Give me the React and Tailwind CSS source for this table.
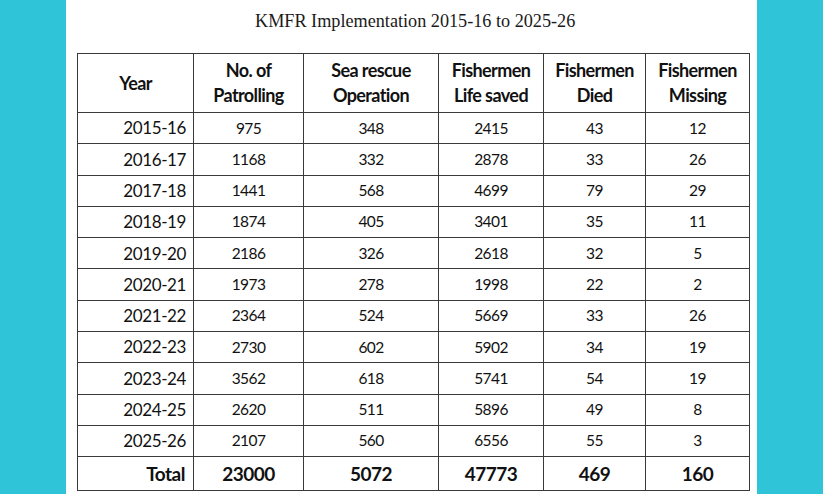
const ROWS = [
  ['2015-16', 975, 348, 2415, 43, 12],
  ['2016-17', 1168, 332, 2878, 33, 26],
  ['2017-18', 1441, 568, 4699, 79, 29],
  ['2018-19', 1874, 405, 3401, 35, 11],
  ['2019-20', 2186, 326, 2618, 32, 5],
  ['2020-21', 1973, 278, 1998, 22, 2],
  ['2021-22', 2364, 524, 5669, 33, 26],
  ['2022-23', 2730, 602, 5902, 34, 19],
  ['2023-24', 3562, 618, 5741, 54, 19],
  ['2024-25', 2620, 511, 5896, 49, 8],
  ['2025-26', 2107, 560, 6556, 55, 3],
]

const TOTALS = [23000, 5072, 47773, 469, 160]

const HEAD = [
  ['No. of', 'Patrolling'],
  ['Sea rescue', 'Operation'],
  ['Fishermen', 'Life saved'],
  ['Fishermen', 'Died'],
  ['Fishermen', 'Missing'],
]

const cell = 'border border-[#3a3a3a] p-0'

export default function App() {
  return (
    <div className="flex h-[494px] w-full overflow-hidden bg-[#30c4d9]">
      <div className="w-[66px] shrink-0" />
      <div className="flex w-[691px] shrink-0 flex-col bg-white pl-[11px]">
        <h1 className="mt-[7px] h-[46px] pl-[178px] font-['Liberation_Serif',serif] text-[18.2px] leading-[28px] text-[#1a1a1a]">
          KMFR Implementation 2015-16 to 2025-26
        </h1>
        <table className="w-[672px] table-fixed border-collapse font-['Lato',sans-serif] text-[#111]">
          <colgroup>
            <col className="w-[116px]" />
            <col className="w-[110px]" />
            <col className="w-[135px]" />
            <col className="w-[105px]" />
            <col className="w-[102px]" />
            <col className="w-[104px]" />
          </colgroup>
          <thead>
            <tr className="h-[59px]">
              <th className={`${cell} text-center text-[18px] font-bold tracking-[-0.6px]`}>Year</th>
              {HEAD.map(([a, b]) => (
                <th key={a + b} className={`${cell} text-center text-[18px] font-bold leading-[25px] tracking-[-0.6px]`}>
                  <div>{a}</div>
                  <div>{b}</div>
                </th>
              ))}
            </tr>
          </thead>
          <tbody>
            {ROWS.map(([year, ...vals]) => (
              <tr key={year} className="h-[31.3px]">
                <td className={`${cell} pr-[7px] text-right text-[17px] tracking-[-0.4px]`}>{year}</td>
                {vals.map((v, i) => (
                  <td key={i} className={`${cell} text-center text-[15.5px] tracking-[-0.6px]`}>{v}</td>
                ))}
              </tr>
            ))}
            <tr className="h-[34px]">
              <td className={`${cell} pr-[8px] text-right text-[19px] font-bold tracking-[-0.5px]`}>Total</td>
              {TOTALS.map((v, i) => (
                <td key={i} className={`${cell} text-center text-[19px] font-bold tracking-[-0.5px]`}>{v}</td>
              ))}
            </tr>
          </tbody>
        </table>
      </div>
      <div className="flex-1" />
    </div>
  )
}
